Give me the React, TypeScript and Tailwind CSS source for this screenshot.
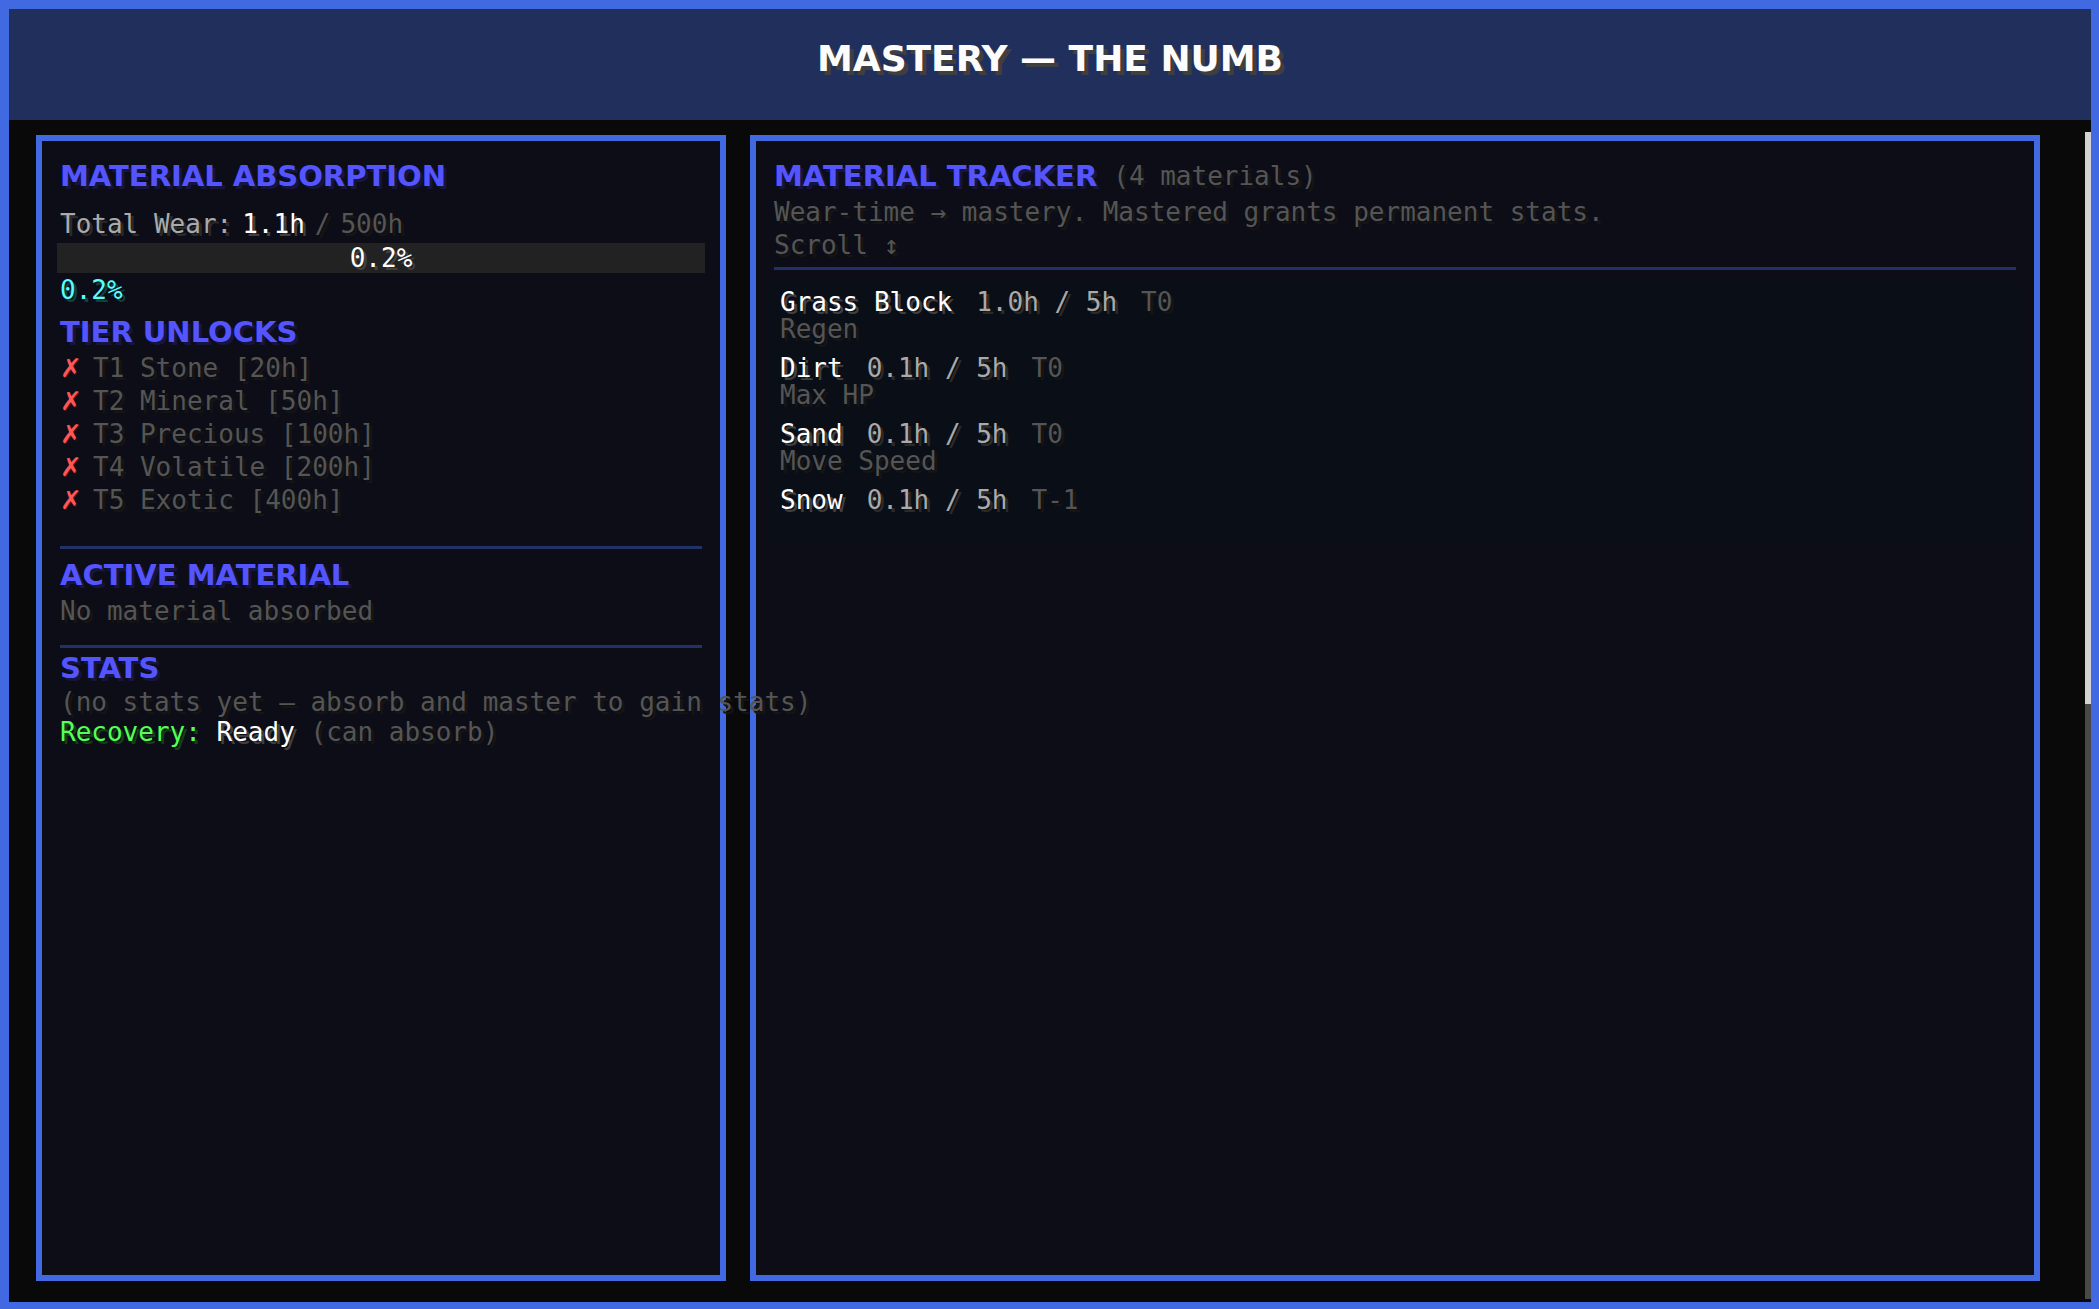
import type { ReactNode } from 'react';

interface Tier {
    id: string;
    name: string;
    hours: number;
}

interface Material {
    name: string;
    worn: string;
    goal: string;
    tier: string;
    bonus?: string;
}

const tiers: Tier[] = [
    { id: 'T1', name: 'Stone', hours: 20 },
    { id: 'T2', name: 'Mineral', hours: 50 },
    { id: 'T3', name: 'Precious', hours: 100 },
    { id: 'T4', name: 'Volatile', hours: 200 },
    { id: 'T5', name: 'Exotic', hours: 400 }
];

const materials: Material[] = [
    { name: 'Grass Block', worn: '1.0h', goal: '5h', tier: 'T0', bonus: 'Regen' },
    { name: 'Dirt', worn: '0.1h', goal: '5h', tier: 'T0', bonus: 'Max HP' },
    { name: 'Sand', worn: '0.1h', goal: '5h', tier: 'T0', bonus: 'Move Speed' },
    { name: 'Snow', worn: '0.1h', goal: '5h', tier: 'T-1' }
];

// Each text colour has a hard drop shadow at a quarter of its brightness
const tones = {
    white: 'text-white [text-shadow:3px_3px_0_#3f3f3f]',
    gray: 'text-[#aaaaaa] [text-shadow:3px_3px_0_#2a2a2a]',
    dim: 'text-[#555555] [text-shadow:3px_3px_0_#151515]',
    aqua: 'text-[#55ffff] [text-shadow:3px_3px_0_#153f3f]',
    green: 'text-[#55ff55] [text-shadow:3px_3px_0_#153f15]',
    red: 'text-[#ff5555] [text-shadow:1px_1px_0_#3f1515]'
};

const Tone = ({ tone, children }: { tone: keyof typeof tones; children: ReactNode }) => (
    <span className={tones[tone]}>{children}</span>
);

const Heading = ({ children }: { children: ReactNode }) => (
    <h2 className="font-['DejaVu_Sans',sans-serif] text-[29px] leading-[33px] font-bold text-[#5555ff] [text-shadow:3px_3px_0_#15153f]">
        {children}
    </h2>
);

const Divider = () => <hr className="h-[3px] border-0 bg-[#213169]" />;

const AbsorptionPanel = () => (
    <section className="relative z-10 min-w-0 border-6 border-[#4169e1] bg-[#0d0d17] px-[18px] pt-[19px] whitespace-nowrap">
        <Heading>MATERIAL ABSORPTION</Heading>
        <p className="mt-[15px] flex gap-2.5">
            <Tone tone="gray">Total Wear:</Tone>
            <Tone tone="white">1.1h</Tone>
            <Tone tone="dim">/</Tone>
            <Tone tone="dim">500h</Tone>
        </p>
        <div
            role="progressbar"
            aria-label="Total wear"
            aria-valuenow={0.2}
            className="-mx-[3px] mt-0.5 h-[30px] bg-[#222222] text-center leading-[30px]"
        >
            <Tone tone="white">0.2%</Tone>
        </div>
        <p className="mt-px">
            <Tone tone="aqua">0.2%</Tone>
        </p>

        <div className="mt-[9px]">
            <Heading>TIER UNLOCKS</Heading>
        </div>
        <ul className="mt-[3px] mb-[29px]">
            {tiers.map((tier) => (
                <li key={tier.id} className="flex">
                    <span className="w-[33px] font-['DejaVu_Sans',sans-serif]">
                        <Tone tone="red">✗</Tone>
                    </span>
                    <Tone tone="dim">
                        {tier.id} {tier.name} [{tier.hours}h]
                    </Tone>
                </li>
            ))}
        </ul>

        <Divider />
        <div className="mt-[10px]">
            <Heading>ACTIVE MATERIAL</Heading>
        </div>
        <p className="mt-[3px] mb-[17px]">
            <Tone tone="dim">No material absorbed</Tone>
        </p>

        <Divider />
        <div className="mt-1">
            <Heading>STATS</Heading>
        </div>
        <div className="mt-0.5 leading-[30px]">
            <p>
                <Tone tone="dim">(no stats yet — absorb and master to gain stats)</Tone>
            </p>
            <p>
                <Tone tone="green">Recovery: </Tone>
                <Tone tone="white">Ready</Tone>
                <Tone tone="dim"> (can absorb)</Tone>
            </p>
        </div>
    </section>
);

const TrackerPanel = () => (
    <section className="min-w-0 border-6 border-[#4169e1] bg-[#0d0d17] px-[18px] pt-[19px]">
        <div className="flex gap-4">
            <Heading>MATERIAL TRACKER</Heading>
            <Tone tone="dim">({materials.length} materials)</Tone>
        </div>
        <p className="mt-[3px]">
            <Tone tone="dim">Wear-time → mastery. Mastered grants permanent stats.</Tone>
        </p>
        <p className="mb-[5px]">
            <Tone tone="dim">Scroll ↕</Tone>
        </p>
        <Divider />
        <ul className="-mx-[6px] mt-3 flex flex-col gap-[3px] leading-[27px]">
            {materials.map((m) => (
                <li key={m.name} className="h-[63px] bg-[#0a0e17] px-3 pt-[7px]">
                    <p className="flex gap-6">
                        <Tone tone="white">{m.name}</Tone>
                        <Tone tone="gray">
                            {m.worn} / {m.goal}
                        </Tone>
                        <Tone tone="dim">{m.tier}</Tone>
                    </p>
                    {m.bonus && (
                        <p>
                            <Tone tone="dim">{m.bonus}</Tone>
                        </p>
                    )}
                </li>
            ))}
        </ul>
    </section>
);

export default function App() {
    return (
        <div className="flex min-h-screen flex-col border-t-9 border-r-8 border-b-7 border-l-9 border-[#4169e1] bg-[#090909] font-['DejaVu_Sans_Mono',monospace] text-[26px] leading-[33px]">
            <header className="flex h-[111px] items-start justify-center bg-[#212f5d] pt-[29px]">
                <h1 className="font-['DejaVu_Sans',sans-serif] text-[36px] leading-[42px] font-bold text-[#fcfcfc] [text-shadow:4px_4px_0_#3f3f3f]">
                    MASTERY — THE NUMB
                </h1>
            </header>
            <main className="flex flex-1 gap-[45px] pl-[27px]">
                <div className="mt-[15px] mb-[21px] grid flex-1 grid-cols-[23fr_43fr] gap-6">
                    <AbsorptionPanel />
                    <TrackerPanel />
                </div>
                {/* Scrollbar */}
                <div className="mt-3 mb-[3px] w-1.5 bg-[#484848]">
                    <div className="h-[49%] bg-[#d3d3d3]" />
                </div>
            </main>
        </div>
    );
}
